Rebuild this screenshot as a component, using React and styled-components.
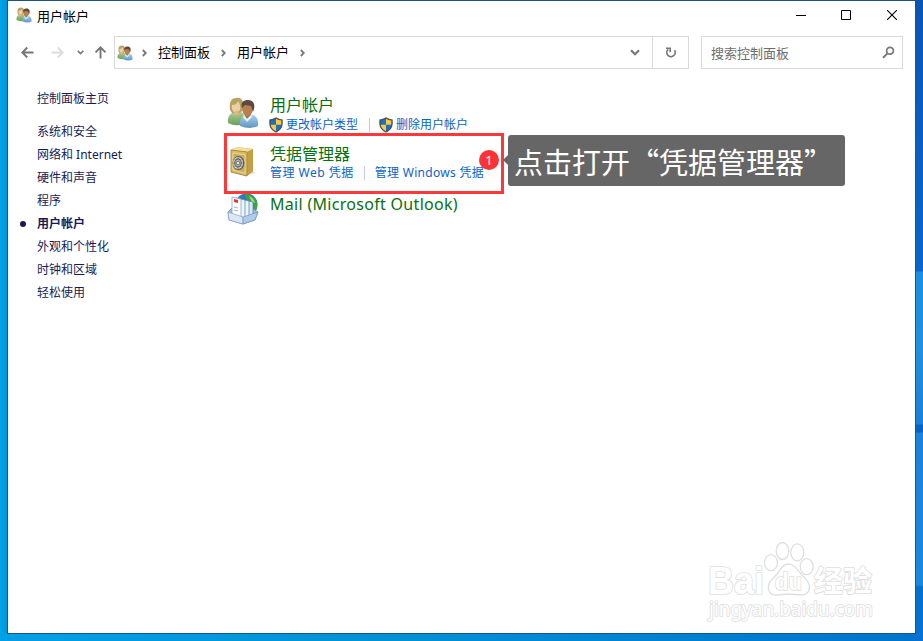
import React from "react";
import styled, { createGlobalStyle } from "styled-components";

const Global = createGlobalStyle`
  *, *::before, *::after { box-sizing: border-box; }
  body { margin: 0; overflow: hidden; font-family: "Noto Sans CJK SC", sans-serif; }
  svg { display: block; flex: none; }
`;

const Desktop = styled.div`
  position: relative;
  width: 923px;
  height: 641px;
  padding: 0 7px 7px 7px;
  background:
    linear-gradient(90deg, #00a0e4, #0090d8 45%, #0074cc) 0 633px / 915px 8px no-repeat,
    linear-gradient(#0a55b4 0, #0a5cc0 100px, #0a66cc 271px, #1b90e2 272px, #2190e0 350px, #1a80d8 424px, #0864c4 425px,
      #0864c4 432px, #1c82dc 433px, #1b88de 585px, #0670d0 587px, #0672d2 641px) 915px 0 / 8px 641px no-repeat,
    linear-gradient(90deg, #00a5ea, #008fd0) 0 0 / 8px 641px no-repeat;
`;

const Window = styled.main`
  display: flex;
  flex-direction: column;
  width: 909px;
  height: 634px;
  border: 1px solid #1c567f;
  background: #fff;
`;

const TitleBar = styled.header`
  display: flex;
  align-items: center;
  height: 30px;
  padding: 0 0 2px 8px;
  font-size: 13px;
  color: #000;
`;

const Title = styled.span`
  flex: 1;
  margin-left: 5px;
`;

const WindowButton = styled.button`
  display: grid;
  place-items: center;
  width: ${(p) => p.$width || 45}px;
  height: 28px;
  padding: 0;
  border: 0;
  background: none;
`;

const NavBar = styled.nav`
  display: flex;
  align-items: center;
  height: 43px;
  padding: 0 11px 0 12px;
`;

const NavButtons = styled.div`
  display: flex;
  align-items: center;
  width: 94px;
`;

const NavIcon = styled.span`
  margin-left: ${(p) => p.$gap || 0}px;
`;

const Field = styled.div`
  display: flex;
  align-items: center;
  width: ${(p) => p.$width}px;
  height: 33px;
  border: 1px solid #d9d9d9;
  font-size: 13px;
  color: ${(p) => p.$color || "#000"};
`;

const AddressBar = styled(Field)`
  padding-left: 2px;
  margin-right: 12px;
`;

const Crumb = styled.span`
  width: 53px;
  margin: 0 10px 2px 11px;
  line-height: 20px;
  white-space: nowrap;
`;

const Spacer = styled.span`
  flex: 1;
`;

const Refresh = styled.span`
  display: grid;
  place-items: center;
  width: 36px;
  height: 31px;
  margin-left: 12px;
  border-left: 1px solid #d9d9d9;
`;

const SearchField = styled(Field)`
  justify-content: space-between;
  padding: 0 7px 0 9px;
`;

const Body = styled.div`
  display: flex;
  flex: 1;
`;

const Sidebar = styled.aside`
  width: 219px;
  padding-top: 13px;
  font-family: "Noto Sans", "Noto Sans CJK SC", sans-serif;
  font-size: 12px;
  line-height: 23px;
  color: #151c55;
`;

const SideItem = styled.div`
  display: flex;
  align-items: center;
  height: 23px;
  padding-left: ${(p) => (p.$active ? 12 : 29)}px;
  margin-bottom: ${(p) => (p.$home ? 10 : 0)}px;
  font-weight: ${(p) => (p.$active ? 700 : 400)};
  white-space: nowrap;
`;

const Bullet = styled.i`
  width: 6px;
  height: 6px;
  margin-right: 11px;
  border-radius: 50%;
  background: #151c55;
`;

const Content = styled.section`
  padding-top: 20px;
`;

const Category = styled.article`
  display: grid;
  grid-template-columns: 32px auto;
  column-gap: 11px;
  height: ${(p) => p.$height}px;
`;

const IconCell = styled.div`
  padding-top: ${(p) => p.$top}px;
`;

const Heading = styled.h2`
  margin: ${(p) => (p.$latin ? 1 : 0)}px 0 0;
  font-family: ${(p) => (p.$latin ? '"Noto Sans"' : '"Noto Sans CJK SC"')}, sans-serif;
  font-size: 16px;
  font-weight: 400;
  line-height: 20px;
  letter-spacing: ${(p) => (p.$latin ? "0.3px" : 0)};
  color: #0a700f;
  white-space: nowrap;
`;

const Links = styled.div`
  display: flex;
  align-items: center;
  height: 18px;
  margin-top: ${(p) => p.$top}px;
  font-family: "Noto Sans", "Noto Sans CJK SC", sans-serif;
  font-size: 12px;
  line-height: 18px;
  color: #0b63c6;
  white-space: nowrap;
`;

const TaskLink = styled.a`
  display: flex;
  align-items: center;
  gap: 3px;
  margin-left: ${(p) => p.$shift || 0}px;
  letter-spacing: ${(p) => p.$spacing || 0}px;
`;

const Divider = styled.i`
  width: 1px;
  height: 14px;
  margin: 0 ${(p) => p.$right}px 0 ${(p) => p.$left}px;
  background: #ccc;
`;

const Highlight = styled.div`
  position: absolute;
  left: 224px;
  top: 133px;
  width: 280px;
  height: 61px;
  border: 3px solid #fb383a;
`;

const Badge = styled.span`
  position: absolute;
  left: 479px;
  top: 150px;
  width: 20px;
  height: 20px;
  border-radius: 50%;
  background: #fb3236;
  color: #fff;
  font: 13px/20px "Noto Sans", sans-serif;
  text-align: center;
`;

const Callout = styled.div`
  position: absolute;
  left: 508px;
  top: 135px;
  width: 337px;
  height: 51px;
  padding-left: 6px;
  border-radius: 3px;
  background: #666;
  color: #fff;
  font-size: 29px;
  line-height: 52px;
  white-space: nowrap;
  &::before {
    content: "";
    position: absolute;
    left: -5px;
    top: 20px;
    border: 5px solid transparent;
    border-left: 0;
    border-right-color: #666;
  }
`;

const Watermark = styled.svg`
  position: absolute;
  left: 700px;
  top: 538px;
`;

const UsersIcon = ({ size }) => (
  <svg width={size} height={size} viewBox="0 0 32 32">
    <defs>
      <linearGradient id="greenShirt" x2="0" y2="1"><stop stopColor="#aecb90" /><stop offset="1" stopColor="#6c9f5b" /></linearGradient>
      <linearGradient id="blueShirt" x2="0" y2="1"><stop stopColor="#a9d0ed" /><stop offset="1" stopColor="#5f94c2" /></linearGradient>
    </defs>
    <path d="M1 26Q0 19 5 16L14 15Q19 17 18 27Q8 30 1 26Z" fill="url(#greenShirt)" />
    <path d="M3 13C2 5 4 1 9 1C15 0 17 4 16 13L13 16H5Z" fill="#b8a263" />
    <path d="M5 8Q10 8 11 4Q14 8 13 13Q10 18 7 15Q4 12 5 8Z" fill="#edcfa5" />
    <path d="M7 15L8 19L12 17V13Z" fill="#dfb487" />
    <path d="M13 29Q12 22 17 19L26 18Q32 20 31 29Q23 33 13 29Z" fill="url(#blueShirt)" />
    <path d="M17 17L20 22L24 18V14Z" fill="#a96e42" />
    <ellipse cx="20.5" cy="12" rx="5.3" ry="7" fill="#b9804f" />
    <path d="M15 11C13 5 17 3 21 3C27 3 29 8 26 15L24 9L18 8Z" fill="#5b4a40" />
    <path d="M17 18L20 22L24 18L25 20L20 25L16 20Z" fill="#e4f1f9" />
  </svg>
);

const SafeIcon = () => (
  <svg width="32" height="32" viewBox="0 0 32 32">
    <path d="M20 29L29 27L24 24Z" fill="#ddd" />
    <path d="M4 4L10 1L26 3L26 25L20 30L4 26Z" fill="#b8983f" />
    <path d="M4 4L10 1L26 3L20 6Z" fill="#f3df9f" />
    <path d="M20 6L26 3V25L20 30Z" fill="#c3a047" />
    <path d="M4 4L20 6V30L4 26Z" fill="#d8bd69" stroke="#ad8e3d" />
    <path d="M6 7L18 9V27L6 24Z" fill="#c9aa55" stroke="#efdc9e" strokeWidth=".8" />
    <ellipse cx="11.5" cy="17" rx="6" ry="7" fill="#5f6261" />
    <ellipse cx="11" cy="17" rx="5" ry="6" fill="#dadbd1" />
    <ellipse cx="11" cy="17" rx="3.2" ry="4" fill="none" stroke="#65686a" strokeWidth="1.4" />
    <path d="M11 11V23M6 17H16M7.5 13L14.5 21M14.5 13L7.5 21" stroke="#777" strokeWidth=".8" />
    <circle cx="11" cy="17" r="1.6" fill="#f7f5dd" stroke="#555" strokeWidth=".6" />
  </svg>
);

const MailIcon = () => (
  <svg width="32" height="32" viewBox="0 0 32 32">
    <circle cx="19.5" cy="11.5" r="11" fill="#2f77bd" />
    <path d="M17 1Q26 0 30 9Q31 18 26 21L23 14L25 11L20 7Z" fill="#3aa346" />
    <path d="M22 3Q27 5 28 10L25 9Z" fill="#9ddd75" />
    <path d="M1 19L5 15H25L31 19L28 27L16 31L2 27Z" fill="#9dbce1" stroke="#6789b7" strokeWidth=".7" />
    <path d="M17 7L26 9V24L17 22Z" fill="#dae8f8" stroke="#527eae" strokeWidth=".7" />
    <path d="M13 6L22 8V25L13 23Z" fill="#eef5fc" stroke="#527eae" strokeWidth=".7" />
    <path d="M9 5L18 7V25L9 23Z" fill="#eef5fc" stroke="#527eae" strokeWidth=".7" />
    <path d="M5 4L14 6V25L5 23Z" fill="#fff" stroke="#7798bf" strokeWidth=".7" />
    <path d="M7 6L11 7V10L7 9Z" fill="#ed3526" />
    <path d="M7 14L11 15M7 17L11 18" stroke="#a1b1c7" />
    <path d="M1 19L16 24V31L2 27Z" fill="#d9e7f6" stroke="#819fc5" strokeWidth=".7" />
    <path d="M16 24L31 19L28 27L16 31Z" fill="#b0cae9" stroke="#7595bf" strokeWidth=".7" />
  </svg>
);

const ShieldIcon = () => (
  <svg width="14" height="16" viewBox="0 0 14 16">
    <path d="M7 .3Q10 2.2 13.7 2.4V7Q13.4 12.5 7 15.7Q.6 12.5 .3 7V2.4Q4 2.2 7 .3Z" fill="#4b5254" />
    <path d="M7 1.8Q4.5 3.3 1.7 3.5V7.8H7ZM7 7.8H12.3Q11.6 11.8 7 14.3Z" fill="#1671cd" />
    <path d="M7 1.8Q9.5 3.3 12.3 3.5V7.8H7ZM7 7.8H1.7Q2.4 11.8 7 14.3Z" fill="#ffc83d" />
  </svg>
);

const Arrow = ({ color, rotate = 0 }) => (
  <svg width="13" height="13" viewBox="0 0 13 13">
    <path transform={`rotate(${rotate} 6.5 6.5)`} d="M12.5 6.5H1.3M6.3 1.5L1.3 6.5L6.3 11.5" fill="none" stroke={color} strokeWidth="1.9" />
  </svg>
);

const ChevronRight = () => (
  <svg width="5" height="8" viewBox="0 0 5 8">
    <path d="M.8 1L3.8 4L.8 7" fill="none" stroke="#777" strokeWidth="1.8" />
  </svg>
);

const ChevronDown = ({ width = 10 }) => (
  <svg width={width} height={width * 0.7} viewBox="0 0 10 7">
    <path d="M1 1.2L5 5.2L9 1.2" fill="none" stroke="#7a7a7a" strokeWidth="2.2" />
  </svg>
);

const categories = ["系统和安全", "网络和 Internet", "硬件和声音", "程序", "用户帐户", "外观和个性化", "时钟和区域", "轻松使用"];

export default function App() {
  return (
    <Desktop lang="zh-CN">
      <Global />
      <Window>
        <TitleBar>
          <UsersIcon size={16} />
          <Title>用户帐户</Title>
          <WindowButton aria-label="最小化">
            <svg width="10" height="10"><path d="M0 5.5H10" stroke="#000" /></svg>
          </WindowButton>
          <WindowButton aria-label="最大化">
            <svg width="10" height="10"><path d="M.5 .5H9.5V9.5H.5Z" fill="none" stroke="#000" /></svg>
          </WindowButton>
          <WindowButton $width={47} aria-label="关闭">
            <svg width="10" height="10"><path d="M0 0L10 10M10 0L0 10" stroke="#000" strokeWidth="1.1" /></svg>
          </WindowButton>
        </TitleBar>
        <NavBar>
          <NavButtons>
            <NavIcon $gap={1}><Arrow color="#777" /></NavIcon>
            <NavIcon $gap={17}><Arrow color="#ddd" rotate={180} /></NavIcon>
            <NavIcon $gap={13}><ChevronDown width={7} /></NavIcon>
            <NavIcon $gap={10}><Arrow color="#777" rotate={90} /></NavIcon>
          </NavButtons>
          <AddressBar $width={575}>
            <UsersIcon size={16} />
            <NavIcon $gap={9} />
            <ChevronRight />
            <Crumb>控制面板</Crumb>
            <ChevronRight />
            <Crumb>用户帐户</Crumb>
            <ChevronRight />
            <Spacer />
            <ChevronDown />
            <Refresh>
              <svg width="12" height="12" viewBox="0 0 12 12">
                <path d="M3.2 2.3A4.2 4.2 0 1 0 9.6 3.3" fill="none" stroke="#777" strokeWidth="1.7" />
                <path d="M1 1.2H5.2V5.2" fill="none" stroke="#777" strokeWidth="1.6" />
              </svg>
            </Refresh>
          </AddressBar>
          <SearchField $width={202} $color="#6d6d6d">
            <span>搜索控制面板</span>
            <svg width="13" height="13" viewBox="0 0 13 13">
              <circle cx="8" cy="4.8" r="3.4" fill="none" stroke="#777" strokeWidth="1.7" />
              <path d="M5.5 7.4L1 11.7" stroke="#777" strokeWidth="2" />
            </svg>
          </SearchField>
        </NavBar>
        <Body>
          <Sidebar>
            <SideItem $home>控制面板主页</SideItem>
            {categories.map((name) => (
              <SideItem key={name} $active={name === "用户帐户"}>
                {name === "用户帐户" && <Bullet />}
                {name}
              </SideItem>
            ))}
          </Sidebar>
          <Content>
            <Category $height={49}>
              <IconCell $top={3}><UsersIcon size={32} /></IconCell>
              <div>
                <Heading>用户帐户</Heading>
                <Links $top={2}>
                  <TaskLink $shift={-1}><ShieldIcon />更改帐户类型</TaskLink>
                  <Divider $left={11} $right={9} />
                  <TaskLink><ShieldIcon />删除用户帐户</TaskLink>
                </Links>
              </div>
            </Category>
            <Category $height={50}>
              <IconCell $top={3}><SafeIcon /></IconCell>
              <div>
                <Heading>凭据管理器</Heading>
                <Links $top={1}>
                  <TaskLink $spacing={0.5}>管理 Web 凭据</TaskLink>
                  <Divider $left={10} $right={10} />
                  <TaskLink $spacing={0.28}>管理 Windows 凭据</TaskLink>
                </Links>
              </div>
            </Category>
            <Category $height={50}>
              <IconCell $top={0}><MailIcon /></IconCell>
              <Heading $latin>Mail (Microsoft Outlook)</Heading>
            </Category>
          </Content>
        </Body>
      </Window>
      <Highlight />
      <Badge>1</Badge>
      <Callout>点击打开“凭据管理器”</Callout>
      <Watermark width="185" height="90" viewBox="0 0 185 90">
        <g fill="#fff" stroke="#dfdfdf" strokeWidth="1.3">
          <ellipse cx="71" cy="24.7" rx="6.5" ry="8" />
          <ellipse cx="82.5" cy="13" rx="6.3" ry="8.5" />
          <ellipse cx="97.3" cy="14.3" rx="6.5" ry="8.5" />
          <ellipse cx="106.7" cy="28.7" rx="6.5" ry="8" />
          <path d="M88 26C94 26 97 31 101 36C107 42 111 46 109 52C106 60 96 56 88 56C80 56 72 60 69 53C66 45 73 41 78 35C81 30 84 26 88 26Z" />
        </g>
        <g fill="#fff" stroke="#dedede" strokeWidth="1.7" paintOrder="stroke" strokeLinejoin="round">
          <text x="8" y="56" fontFamily="Liberation Sans" fontWeight="700" fontSize="38" textLength="56" lengthAdjust="spacingAndGlyphs">Bai</text>
          <text x="75" y="52" fontFamily="Liberation Sans" fontWeight="700" fontSize="24" textLength="27" lengthAdjust="spacingAndGlyphs">du</text>
          <text x="114" y="54" fontFamily="Noto Sans CJK SC" fontWeight="700" fontSize="29" textLength="58">经验</text>
          <text x="9" y="78" fontFamily="Noto Sans" fontSize="19" textLength="164" lengthAdjust="spacingAndGlyphs">jingyan.baidu.com</text>
        </g>
      </Watermark>
    </Desktop>
  );
}
